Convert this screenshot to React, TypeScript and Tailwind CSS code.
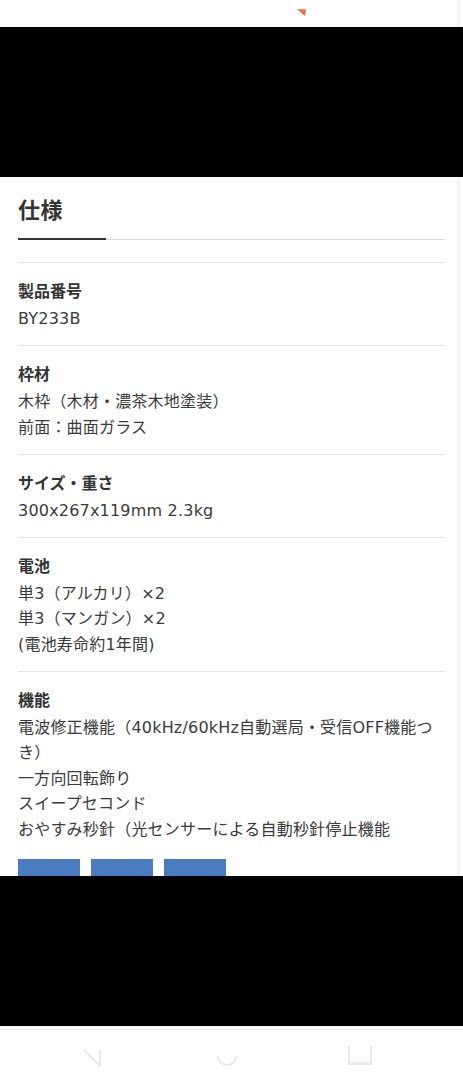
import React from "react";

const FONT = '"DejaVu Sans", "Noto Sans CJK JP", sans-serif';

type Spec = { label: string; values: string[] };

const specs: Spec[] = [
  { label: "製品番号", values: ["BY233B"] },
  { label: "枠材", values: ["木枠（木材・濃茶木地塗装）", "前面：曲面ガラス"] },
  { label: "サイズ・重さ", values: ["300x267x119mm 2.3kg"] },
  { label: "電池", values: ["単3（アルカリ）×2", "単3（マンガン）×2", "(電池寿命約1年間)"] },
  {
    label: "機能",
    values: [
      "電波修正機能（40kHz/60kHz自動選局・受信OFF機能つ",
      "き）",
      "一方向回転飾り",
      "スイープセコンド",
      "おやすみ秒針（光センサーによる自動秒針停止機能",
    ],
  },
];

export default function App() {
  return (
    <div className="w-[463px] h-[1080px] bg-white overflow-hidden flex flex-col" style={{ fontFamily: FONT }}>
      {/* top bar */}
      <div className="h-[27px] shrink-0 bg-white relative">
        <svg className="absolute left-[296px] top-[8px]" width="12" height="10" viewBox="0 0 12 10">
          <path d="M1 1 L10 1.5 L9 8 Z" fill="#ef6a3c" />
        </svg>
        <div className="absolute right-[3px] top-0 w-[3px] h-full bg-[#f4f4f4]" />
      </div>
      {/* black overlay block */}
      <div className="h-[150px] shrink-0 bg-black" />

      {/* content */}
      <div className="relative h-[699px] shrink-0 overflow-hidden bg-white px-[18px] text-[#333]">
        <h2
          className="pt-[15px] text-[22px] leading-[33px] font-bold text-[#333] tracking-[0.5px]"
          style={{ fontFamily: '"Noto Sans CJK JP", sans-serif' }}
        >
          仕様
        </h2>
        <div className="mt-[13px] flex items-end">
          <div className="w-[88px] h-[2px] bg-[#333]" />
          <div className="flex-1 h-px bg-[#dcdcdc]" />
        </div>
        <div className="mt-[22px]">
          {specs.map((s, i) => (
            <div key={s.label} className="border-t border-[#e3e3e3]">
              <div
                className="pt-[15px] h-[39px] text-[16px] leading-[24px] font-bold text-[#333]"
                style={{ fontFamily: '"Noto Sans CJK JP", sans-serif' }}
              >
                {s.label}
              </div>
              <div className={`mt-[4px] ${i === specs.length - 1 ? "" : "pb-[13.5px]"}`}>
                {s.values.map((v, j) => (
                  <div key={j} className="text-[16px] leading-[25.5px] whitespace-nowrap text-[#3a3a3a] tracking-[0.2px]">
                    {v}
                  </div>
                ))}
              </div>
            </div>
          ))}
        </div>
        <div className="mt-[17px] flex gap-[11px]">
          <div className="w-[62px] h-[40px] bg-[#4a7cc2]" />
          <div className="w-[62px] h-[40px] bg-[#4a7cc2]" />
          <div className="w-[62px] h-[40px] bg-[#4a7cc2]" />
        </div>
        {/* scrollbar strip */}
        <div className="absolute right-[3px] top-0 w-[3px] h-full bg-[#f4f4f4] pointer-events-none" />
      </div>

      {/* black overlay block */}
      <div className="h-[150px] shrink-0 bg-black" />

      {/* nav bar */}
      <div className="flex-1 bg-white pt-[3px]">
        <div className="h-px bg-[#eeeeee]" />
        <div className="relative h-[50px]">
          <svg className="absolute left-[80px] top-[16px]" width="24" height="24" viewBox="0 0 24 24">
            <path d="M4 4 L20 20 L20 4" fill="none" stroke="#e8e8e8" strokeWidth="2" strokeLinejoin="round" />
          </svg>
          <svg className="absolute left-[215px] top-[14px]" width="24" height="24" viewBox="0 0 24 24">
            <path d="M3 12 A9 9 0 0 0 21 12" fill="none" stroke="#e8e8e8" strokeWidth="2" />
          </svg>
          <svg className="absolute left-[346px] top-[12px]" width="28" height="26" viewBox="0 0 28 26">
            <path d="M3 4 L3 22 L25 22 L25 4" fill="none" stroke="#e8e8e8" strokeWidth="2" />
            <path d="M7 20 L21 20" stroke="#eeeeee" strokeWidth="1.5" />
          </svg>
        </div>
      </div>
    </div>
  );
}
